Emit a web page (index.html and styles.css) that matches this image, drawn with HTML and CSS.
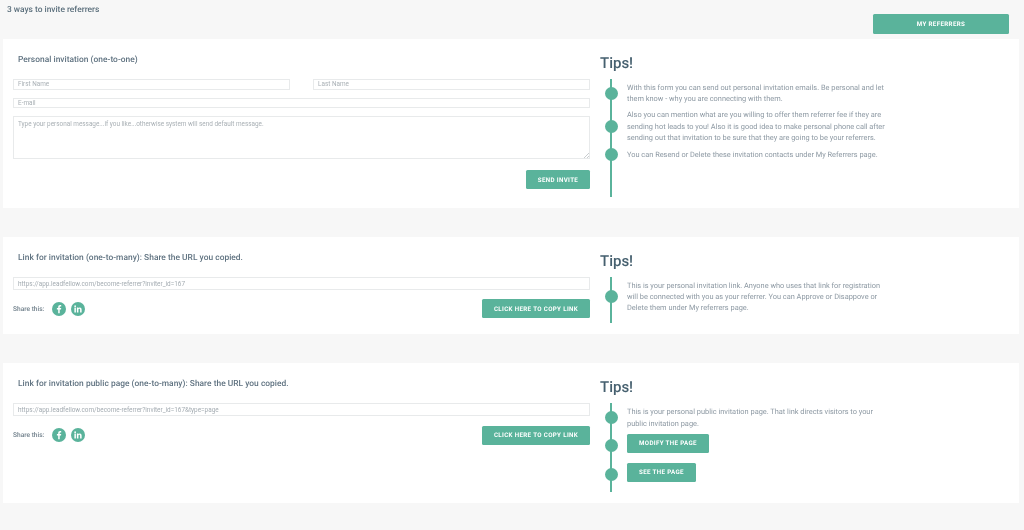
FILE: index.html
```html
<!DOCTYPE html>
<html lang="en">
<head>
<meta charset="utf-8">
<title>3 ways to invite referrers</title>
<link rel="stylesheet" href="styles.css">
</head>
<body>
<div class="page">
  <header class="top">
    <h1 class="page-title">3 ways to invite referrers</h1>
    <a class="btn btn-referrers">MY REFERRERS</a>
  </header>

  <section class="card">
    <div class="main">
      <h2 class="card-title">Personal invitation (one-to-one)</h2>
      <div class="row-two">
        <input class="field" placeholder="First Name">
        <input class="field" placeholder="Last Name">
      </div>
      <input class="field" placeholder="E-mail">
      <textarea class="field area" placeholder="Type your personal message...if you like...otherwise system will send default message."></textarea>
      <div class="actions actions-end"><a class="btn btn-send">SEND INVITE</a></div>
    </div>
    <aside class="tips">
      <h3 class="tips-title">Tips!</h3>
      <div class="timeline">
        <div class="step"><span class="dot"></span><p>With this form you can send out personal invitation emails. Be personal and let them know - why you are connecting with them.</p></div>
        <div class="step"><span class="dot"></span><p>Also you can mention what are you willing to offer them referrer fee if they are sending hot leads to you! Also it is good idea to make personal phone call after sending out that invitation to be sure that they are going to be your referrers.</p></div>
        <div class="step"><span class="dot"></span><p>You can Resend or Delete these invitation contacts under My Referrers page.</p></div>
      </div>
    </aside>
  </section>

  <section class="card">
    <div class="main">
      <h2 class="card-title">Link for invitation (one-to-many): Share the URL you copied.</h2>
      <input class="field field-url" value="https://app.leadfellow.com/become-referrer?inviter_id=167">
      <div class="actions">
        <div class="share">
          <span class="share-label">Share this:</span>
          <svg class="social" viewBox="0 0 14 14"><circle cx="7" cy="7" r="7"/><path class="glyph" d="M7.7 11.3V7.5h1.3l.2-1.5H7.7v-.9c0-.4.1-.7.7-.7h.8V3.1c-.2 0-.6-.1-1.1-.1-1.2 0-1.9.7-1.9 2V6H4.9v1.5h1.3v3.8z"/></svg>
          <svg class="social" viewBox="0 0 14 14"><circle cx="7" cy="7" r="7"/><path class="glyph" d="M3.4 5.6h1.5v4.9H3.4zM4.15 3.3a.87.87 0 1 1 0 1.74.87.87 0 0 1 0-1.74zM5.9 5.6h1.45v.67c.2-.38.7-.79 1.44-.79 1.54 0 1.83 1.01 1.83 2.33v2.69H9.1V8.1c0-.57-.01-1.3-.8-1.3s-.9.62-.9 1.26v2.44H5.9z"/></svg>
        </div>
        <a class="btn btn-copy">CLICK HERE TO COPY LINK</a>
      </div>
    </div>
    <aside class="tips">
      <h3 class="tips-title">Tips!</h3>
      <div class="timeline">
        <div class="step"><span class="dot"></span><p>This is your personal invitation link. Anyone who uses that link for registration will be connected with you as your referrer. You can Approve or Disappove or Delete them under My referrers page.</p></div>
      </div>
    </aside>
  </section>

  <section class="card">
    <div class="main">
      <h2 class="card-title">Link for invitation public page (one-to-many): Share the URL you copied.</h2>
      <input class="field field-url" value="https://app.leadfellow.com/become-referrer?inviter_id=167&amp;type=page">
      <div class="actions">
        <div class="share">
          <span class="share-label">Share this:</span>
          <svg class="social" viewBox="0 0 14 14"><circle cx="7" cy="7" r="7"/><path class="glyph" d="M7.7 11.3V7.5h1.3l.2-1.5H7.7v-.9c0-.4.1-.7.7-.7h.8V3.1c-.2 0-.6-.1-1.1-.1-1.2 0-1.9.7-1.9 2V6H4.9v1.5h1.3v3.8z"/></svg>
          <svg class="social" viewBox="0 0 14 14"><circle cx="7" cy="7" r="7"/><path class="glyph" d="M3.4 5.6h1.5v4.9H3.4zM4.15 3.3a.87.87 0 1 1 0 1.74.87.87 0 0 1 0-1.74zM5.9 5.6h1.45v.67c.2-.38.7-.79 1.44-.79 1.54 0 1.83 1.01 1.83 2.33v2.69H9.1V8.1c0-.57-.01-1.3-.8-1.3s-.9.62-.9 1.26v2.44H5.9z"/></svg>
        </div>
        <a class="btn btn-copy">CLICK HERE TO COPY LINK</a>
      </div>
    </div>
    <aside class="tips">
      <h3 class="tips-title">Tips!</h3>
      <div class="timeline">
        <div class="step"><span class="dot"></span><p>This is your personal public invitation page. That link directs visitors to your public invitation page.</p></div>
        <div class="step"><span class="dot"></span><a class="btn btn-step btn-modify">MODIFY THE PAGE</a></div>
        <div class="step"><span class="dot"></span><a class="btn btn-step btn-see">SEE THE PAGE</a></div>
      </div>
    </aside>
  </section>
</div>
</body>
</html>
```

FILE: styles.css
```css
* { box-sizing: border-box; }
html, body { margin: 0; height: 100%; }
body {
  background: #f7f7f7;
  font-family: Roboto, "Liberation Sans", sans-serif;
  text-rendering: geometricPrecision;
  overflow: hidden;
}
.page { padding: 0 5px 0 3px; will-change: transform; }

.top {
  height: 39px;
  display: flex;
  justify-content: space-between;
  align-items: flex-start;
  padding: 14px 10px 0 4px;
}
.page-title {
  margin: -9px 0 0;
  font-size: 8.4px;
  line-height: 11px;
  font-weight: 500;
  color: #5b6f7c;
}

.btn {
  display: flex;
  align-items: center;
  justify-content: center;
  height: 19px;
  background: #5ab39b;
  border-radius: 1.5px;
  color: #fff;
  font-size: 6.2px;
  font-weight: 700;
  letter-spacing: .35px;
  white-space: nowrap;
}
.btn-referrers { width: 136px; height: 20px; }
.btn-send { width: 64px; }
.btn-copy { width: 108px; }
.btn-step { margin-bottom: 5px; }
.btn-modify { width: 82px; }
.btn-see { width: 69px; }

.card {
  display: grid;
  grid-template-columns: 587px 1fr;
  column-gap: 10px;
  margin-bottom: 29px;
  background: #fff;
}
.main {
  padding: 14px 0 16px 10px;
  display: flex;
  flex-direction: column;
  gap: 8px;
}
.card-title {
  margin: 0 0 3px 5px;
  font-size: 8.4px;
  line-height: 15px;
  font-weight: 500;
  color: #5f7280;
  letter-spacing: .03px;
}
.field {
  display: block;
  width: 100%;
  height: 10.5px;
  padding: 0 4px;
  border: 1px solid #e8eaeb;
  border-radius: 0;
  background: #fff;
  font-family: inherit;
  font-size: 6.4px;
  color: #a4acb2;
  outline: none;
}
.field::placeholder { color: #a9b0b5; opacity: 1; }
.row-two {
  display: grid;
  grid-template-columns: 277px 277px;
  justify-content: space-between;
}
.area {
  height: 42.5px;
  padding: 3px 4px;
  line-height: 8px;
  resize: vertical;
}
.area::-webkit-resizer {
  background: linear-gradient(135deg, transparent 50%, #c9cdd0 50%, #c9cdd0 62%, transparent 62%, transparent 75%, #c9cdd0 75%, #c9cdd0 87%, transparent 87%) no-repeat right bottom / 6px 6px;
}
.field-url { height: 13px; }
.actions {
  display: flex;
  justify-content: space-between;
  align-items: flex-start;
  margin-top: 1.4px;
}
.actions-end { justify-content: flex-end; margin: 3.5px 0 3px; }

.share {
  display: flex;
  align-items: center;
  height: 19px;
}
.share-label {
  width: 39px;
  font-size: 6.6px;
  font-weight: 500;
  color: #6f7f8a;
}
.social { width: 14px; height: 14px; margin-right: 5px; fill: #5ab39b; }
.social .glyph { fill: #fff; }

.tips {
  display: flex;
  flex-direction: column;
  padding: 14px 0 11px;
}
.tips-title {
  margin: 0 0 5px;
  font-size: 15px;
  line-height: 21px;
  font-weight: 500;
  color: #46606f;
}
.timeline {
  position: relative;
  flex: 1;
  padding: 3px 0 0 5px;
}
.timeline::before {
  content: "";
  position: absolute;
  left: 10px;
  top: 0;
  bottom: 0;
  width: 2px;
  background: #5ab39b;
}
.step {
  position: relative;
  display: flex;
  align-items: center;
  gap: 9px;
  width: 285px;
  margin-bottom: 5px;
}
.dot {
  flex: none;
  width: 13px;
  height: 13px;
  border-radius: 50%;
  background: #5ab39b;
}
.step p {
  margin: 0;
  font-size: 7.4px;
  line-height: 11.2px;
  color: #8d99a3;
}
```
